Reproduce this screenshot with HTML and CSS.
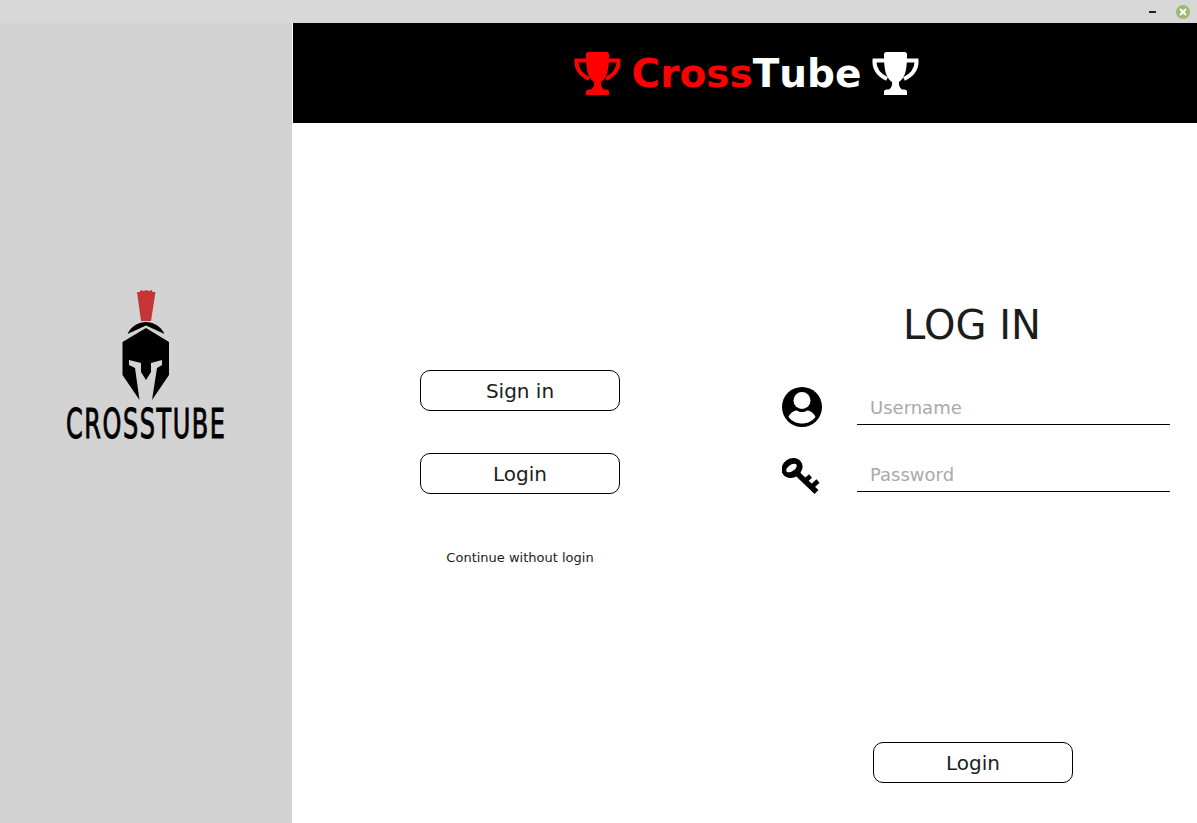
FILE: index.html
```html
<!DOCTYPE html>
<html lang="en">
<head>
    <meta charset="UTF-8">
    <meta name="viewport" content="width=device-width, initial-scale=1.0">
    <title>CrossTube</title>
    <link rel="stylesheet" href="styles.css">
</head>
<body>
    <svg class="defs" width="0" height="0">
        <symbol id="trophy" viewBox="0 0 47 43">
            <path fill="currentColor" d="M12 2.500Q12 0 14.500 0L32.500 0Q35 0 35 2.500C35 16 34 25 27 30C26.500 33 27.500 35.500 30 37.500L32.500 37.500Q35 37.500 35 40L35 43L12 43L12 40Q12 37.500 14.500 37.500L17 37.500C19.500 35.500 20.500 33 20 30C13 25 12 16 12 2.500Z"/>
            <path fill="none" stroke="currentColor" stroke-width="4" d="M13 8.500L2.500 8.500C2 17 7 23 15 27M34 8.500L44.500 8.500C45 17 40 23 32 27"/>
        </symbol>
    </svg>

    <!-- Window bar -->
    <div class="titlebar">
        <span class="minimize"></span>
        <span class="close">
            <svg width="8" height="8" viewBox="0 0 8 8"><path d="M1 1L7 7M7 1L1 7" stroke="#fff" stroke-width="2"/></svg>
        </span>
    </div>

    <div class="app">
        <!-- Logo column -->
        <aside class="sidebar">
            <svg class="logo" width="170" height="175" viewBox="60 285 170 175">
                <path fill="#c53535" d="M137 292L140 292L140.500 290L143.500 291L146 290L149 291L152 290L152.500 292L155.500 292L151 321L141 321Z"/>
                <path d="M127.500 334C131 326 139 322 146 322C153 322 161 326 164.500 334L146 325.500Z"/>
                <path d="M146 328L169 342L169 375L152 400L157 368L162 365L162 360L151 363L151 372L146 380L141 372L141 363L129 360L129 365L135 368L139.500 400L122.500 375L122.500 342Z"/>
                <text class="logo-text" transform="translate(66 438) scale(1 1.700)" textLength="159">CROSSTUBE</text>
            </svg>
        </aside>

        <main class="main">
            <header class="banner">
                <svg class="trophy red" width="47" height="43"><use href="#trophy"/></svg>
                <span class="brand"><span class="red">Cross</span>Tube</span>
                <svg class="trophy" width="47" height="43"><use href="#trophy"/></svg>
            </header>

            <div class="panels">
                <section class="choices">
                    <button class="btn">Sign in</button>
                    <button class="btn">Login</button>
                    <a class="skip" href="#">Continue without login</a>
                </section>

                <section class="login">
                    <h1>LOG IN</h1>
                    <div class="field">
                        <svg width="40" height="40" viewBox="0 0 40 40">
                            <circle cx="20" cy="20" r="20"/>
                            <circle cx="20" cy="13.500" r="8.500" fill="#fff"/>
                            <path fill="#fff" d="M6.500 30C8 26 12 23.500 15 23.500C18 25.500 22 25.500 25 23.500C28 23.500 32 26 33.500 30C30 34.500 25 36.500 20 36.500C15 36.500 10 34.500 6.500 30Z"/>
                        </svg>
                        <input type="text" placeholder="Username">
                    </div>
                    <div class="field">
                        <svg width="40" height="40" viewBox="0 0 40 40">
                            <path fill="none" stroke="#000" stroke-width="5.500" d="M12 16.500L34.500 38"/>
                            <path fill="none" stroke="#000" stroke-width="4.500" d="M23 27L28.500 22M29.500 33L36 27"/>
                            <ellipse cx="10" cy="14" rx="11" ry="9.500" transform="rotate(-35 10 14)"/>
                            <ellipse cx="9.500" cy="14" rx="6" ry="3.200" transform="rotate(-35 9.500 14)" fill="#fff"/>
                        </svg>
                        <input type="password" placeholder="Password">
                    </div>
                    <button class="btn btn-submit">Login</button>
                </section>
            </div>
        </main>
    </div>
</body>
</html>
```

FILE: styles.css
```css
* {
    box-sizing: border-box;
}

html, body {
    height: 100%;
}

body {
    font-family: "DejaVu Sans", sans-serif;
    color: #1c1c1c;
    background-color: #fff;
    margin: 0;
    display: flex;
    flex-direction: column;
    overflow: hidden;
}

.defs {
    display: none;
}

.titlebar {
    height: 23px;
    flex: none;
    background-color: #d8d8d8;
    display: flex;
    justify-content: flex-end;
    align-items: center;
    padding-right: 7px;
}

.minimize {
    width: 7px;
    height: 2px;
    background-color: #222;
    margin-right: 20px;
}

.close {
    width: 14px;
    height: 14px;
    border-radius: 50%;
    background-color: #9cba6e;
    display: flex;
    align-items: center;
    justify-content: center;
}

.app {
    flex: 1;
    display: flex;
}

.sidebar {
    width: 292px;
    background-color: #d3d3d3;
    padding: 262px 0 0 60px;
}

.logo {
    display: block;
}

.logo-text {
    font-family: "DejaVu Sans", sans-serif;
    font-size: 24px;
    stroke: #000;
    stroke-width: 0.6px;
}

.main {
    flex: 1;
    margin-left: 1px;
    display: flex;
    flex-direction: column;
}

.banner {
    height: 100px;
    background-color: #000;
    color: #fff;
    display: flex;
    justify-content: center;
    align-items: center;
    gap: 11px;
    padding-left: 3px;
}

.brand {
    font-size: 39px;
    font-weight: bold;
    font-kerning: none;
}

.red {
    color: #f00;
}

.panels {
    flex: 1;
    display: grid;
    grid-template-columns: 454px 1fr;
}

.choices {
    display: flex;
    flex-direction: column;
    align-items: center;
    padding-top: 247px;
}

.btn {
    width: 200px;
    height: 41px;
    font-family: inherit;
    font-size: 20px;
    color: #1c1c1c;
    background-color: #fff;
    border: 1px solid #000;
    border-radius: 10px;
    padding: 0;
    cursor: pointer;
}

.btn + .btn {
    margin-top: 42px;
}

.skip {
    margin-top: 56px;
    font-size: 13px;
    color: #1c1c1c;
    text-decoration: none;
}

.login {
    display: flex;
    flex-direction: column;
    padding-top: 178px;
    padding-bottom: 40px;
}

h1 {
    margin: 0 0 38px;
    height: 48px;
    line-height: 48px;
    font-size: 40px;
    font-weight: normal;
    text-align: center;
}

.field {
    display: flex;
    align-items: flex-end;
    gap: 35px;
    padding-left: 35px;
    margin-bottom: 27px;
}

.field input {
    width: 313px;
    height: 36px;
    margin-bottom: 2px;
    border: 0;
    border-bottom: 1px solid #000;
    padding: 2px 13px 0;
    font-family: inherit;
    font-size: 18px;
    color: #1c1c1c;
    outline: none;
}

.field input::placeholder {
    color: #a9a9a9;
    opacity: 1;
}

.btn-submit {
    margin-top: auto;
    margin-left: 126px;
}
```
